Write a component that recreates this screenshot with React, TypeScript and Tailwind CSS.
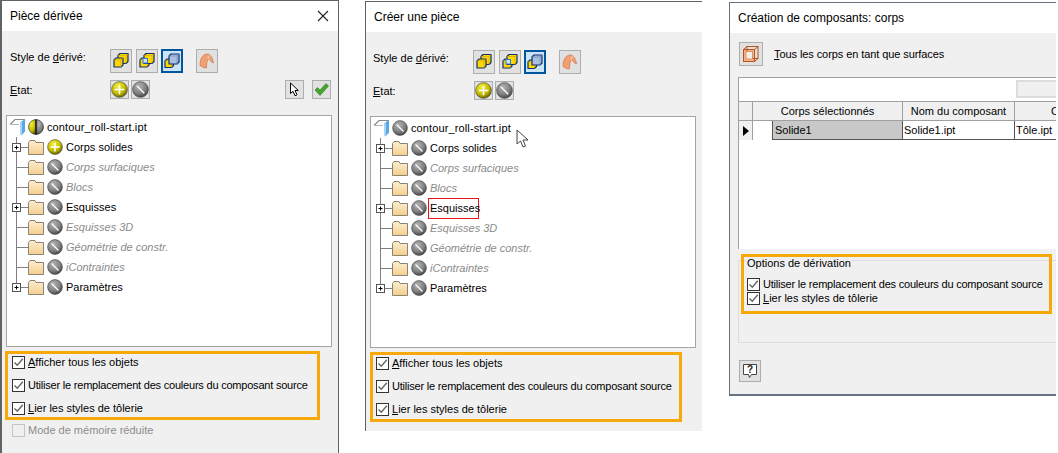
import { useId } from 'react'
import type { ReactNode } from 'react'

function Ball({ kind, size = 16 }: { kind: 'plus' | 'none' | 'half'; size?: number }) {
  const id = useId()
  return (
    <svg width={size} height={size} viewBox="0 0 16 16" className="shrink-0">
      <defs>
        <radialGradient id={id + 'y'} cx="40%" cy="30%" r="75%">
          <stop offset="0" stopColor="#f4f03a" />
          <stop offset="0.6" stopColor="#c4bc00" />
          <stop offset="1" stopColor="#5c5600" />
        </radialGradient>
        <radialGradient id={id + 'g'} cx="40%" cy="30%" r="75%">
          <stop offset="0" stopColor="#b4b4b4" />
          <stop offset="0.6" stopColor="#808080" />
          <stop offset="1" stopColor="#404040" />
        </radialGradient>
      </defs>
      {kind === 'half' ? (
        <>
          <path d="M8 .5a7.5 7.5 0 0 0 0 15z" fill={`url(#${id}y)`} stroke="#333" strokeWidth=".6" />
          <path d="M8 .5a7.5 7.5 0 0 1 0 15z" fill={`url(#${id}g)`} stroke="#333" strokeWidth=".6" />
          <path d="M8 .5v15" stroke="#111" strokeWidth="1.2" />
        </>
      ) : (
        <circle cx="8" cy="8" r="7.4" fill={`url(#${id}${kind === 'plus' ? 'y' : 'g'})`} stroke="#444" strokeWidth=".6" />
      )}
      {kind === 'plus' && <path d="M8 3.5v9M3.5 8h9" stroke="#fff" strokeWidth="1.5" />}
      {kind === 'none' && <path d="M4.5 4.5l7 7" stroke="#fff" strokeWidth="1.2" />}
    </svg>
  )
}

function Folder() {
  const id = useId()
  return (
    <svg width="16" height="16" viewBox="0 0 16 16" className="shrink-0">
      <defs>
        <linearGradient id={id} x1="0" y1="0" x2="0" y2="1">
          <stop offset="0" stopColor="#fdeed2" />
          <stop offset="1" stopColor="#f3cf8f" />
        </linearGradient>
      </defs>
      <path d="M.5 3.5L2 1.5h5l1 2h7.5v12H.5z" fill={`url(#${id})`} stroke="#8d8371" strokeWidth="1" />
    </svg>
  )
}

function PartIcon() {
  return (
    <svg width="17" height="18" viewBox="0 0 17 18" className="shrink-0">
      <path d="M1 6.5L6 1.5h10" fill="none" stroke="#8a8a8a" strokeWidth="1.2" />
      <path d="M1 6.5h9" stroke="#b5b5b5" strokeWidth="1" />
      <path d="M11 4.5L16 1v12.500l-3.500 4L11 15z" fill="#5aa9e6" />
      <path d="M11 4.500l2-.5v12l-1 1.500-1-2z" fill="#a8d4f5" />
    </svg>
  )
}

function Gutter({ plus, last }: { plus?: boolean; last?: boolean }) {
  return (
    <svg width="21" height="20" viewBox="0 0 21 20" className="shrink-0">
      <path d={last ? 'M9.500 0v10M9.500 10.500H21' : 'M9.500 0v20M9.500 10.500H21'} stroke="#7f7f7f" strokeWidth="1" />
      {plus && (
        <>
          <rect x="5.500" y="6.500" width="8" height="8" fill="#fff" stroke="#555" />
          <path d="M7.500 10.500h4M9.500 8.500v4" stroke="#000" strokeWidth="1" />
        </>
      )}
    </svg>
  )
}

function TreeRow({ label, ball, plus, last, dim, mark }: { label: string; ball: 'plus' | 'none'; plus?: boolean; last?: boolean; dim?: boolean; mark?: boolean }) {
  return (
    <div className="flex items-center h-5">
      <Gutter plus={plus} last={last} />
      <Folder />
      <span className="ml-[3px]"><Ball kind={ball} /></span>
      {mark ? (
        <span className="ml-[1px] pl-[1px] w-[51px] h-[21px] leading-[19px] border border-[#e8141c] text-black">{label}</span>
      ) : (
        <span className={dim ? 'ml-[3px] italic text-[#8b8b8b]' : 'ml-[3px] text-black'}>{label}</span>
      )}
    </div>
  )
}

function Tree({ root, firstBall, mark }: { root: 'half' | 'none'; firstBall: 'plus' | 'none'; mark?: boolean }) {
  return (
    <div className="h-[232px] bg-white border border-[#a5a5a5] pt-[1px]">
      <div className="flex items-center h-5 pl-[2px]">
        <PartIcon />
        <span className="ml-[2px]"><Ball kind={root} /></span>
        <span className="ml-[3px] text-black tracking-[0.12px]">contour_roll-start.ipt</span>
      </div>
      <TreeRow label="Corps solides" ball={firstBall} plus />
      <TreeRow label="Corps surfaciques" ball="none" dim />
      <TreeRow label="Blocs" ball="none" dim />
      <TreeRow label="Esquisses" ball="none" plus mark={mark} />
      <TreeRow label="Esquisses 3D" ball="none" dim />
      <TreeRow label="Géométrie de constr." ball="none" dim />
      <TreeRow label="iContraintes" ball="none" dim />
      <TreeRow label="Paramètres" ball="none" plus last />
    </div>
  )
}

function Check({ children, off }: { children: ReactNode; off?: boolean }) {
  return (
    <div className={off ? 'flex items-center text-[#8c8c8c]' : 'flex items-center text-black'}>
      <span className={off ? 'w-[13px] h-[13px] bg-[#f0f0f0] border border-[#c4c4c4] shrink-0' : 'w-[13px] h-[13px] bg-white border border-[#333] shrink-0 flex items-center justify-center'}>
        {!off && (
          <svg width="11" height="11" viewBox="0 0 11 11">
            <path d="M1.500 5.500l2.800 2.800L9.800 1.800" fill="none" stroke="#666" strokeWidth="1.400" />
          </svg>
        )}
      </span>
      <span className="ml-[3px] whitespace-nowrap">{children}</span>
    </div>
  )
}

function Tool({ children, active, w = 'w-[22px]', h = 'h-[24px]' }: { children: ReactNode; active?: boolean; w?: string; h?: string }) {
  return (
    <div className={`${w} ${h} flex items-center justify-center shrink-0 ${active ? 'bg-[#cce4f7] border-2 border-[#00569c]' : 'bg-[#e1e1e1] border border-[#adadad]'}`}>
      {children}
    </div>
  )
}

// bloc vu en perspective: une seule silhouette, arêtes intérieures à peine marquées
function Cube({ x, y, s, fill, edge }: { x: number; y: number; s: number; fill: string; edge: string }) {
  const d = 2
  return (
    <g>
      <path
        d={`M${x} ${y}l${d} ${-d}h${s}v${s}l${-d} ${d}h${-s}z`}
        fill={fill}
        stroke="#0f2f70"
        strokeWidth="1.200"
        strokeLinejoin="round"
      />
      <path d={`M${x} ${y}h${s}v${s}M${x + s} ${y}l${d} ${-d}`} fill="none" stroke={edge} strokeWidth=".7" />
    </g>
  )
}

function StyleIcon({ kind }: { kind: 1 | 2 | 3 }) {
  return (
    <svg width="16" height="16" viewBox="0 0 16 16">
      {kind === 1 && (
        <>
          <Cube x={5} y={2.500} s={8} fill="#ffd800" edge="#d9a800" />
          <Cube x={1} y={7} s={7} fill="#ffd800" edge="#d9a800" />
        </>
      )}
      {kind === 2 && (
        <>
          <Cube x={1} y={7} s={7} fill="#ffd800" edge="#d9a800" />
          <Cube x={5} y={2.500} s={8} fill="#ffd800" edge="#d9a800" />
          <rect x="4" y="5.500" width="4.500" height="4.500" fill="#cfe4fa" stroke="#2d7bd0" strokeWidth="1" />
        </>
      )}
      {kind === 3 && (
        <>
          <Cube x={1} y={8} s={6.500} fill="#ffd800" edge="#d9a800" />
          <Cube x={5} y={3} s={8} fill="#a9c0e0" edge="#6f8db8" />
        </>
      )}
    </svg>
  )
}

function SurfaceIcon() {
  return (
    <svg width="16" height="16" viewBox="0 0 16 16">
      <path d="M1 12.500C1 6.500 3 1.500 8 1c3-.2 5.500 3 6.500 9L12 8.500C11 7 10 6 9 6c-1 2-1.500 5-1.500 9C5 15 3 14 1 12.500z" fill="#f2a073" stroke="#c9764a" strokeWidth=".7" />
      <path d="M9 6c0-1.500.5-3 2-3.500" fill="none" stroke="#fbd8c2" strokeWidth="1" />
    </svg>
  )
}

function StylesBar() {
  return (
    <div className="flex items-center h-6">
      <span className="w-[100px] text-black -mt-[8px]">Style de <u>d</u>érivé:</span>
      <Tool><StyleIcon kind={1} /></Tool>
      <span className="w-1" />
      <Tool><StyleIcon kind={2} /></Tool>
      <span className="w-[3px]" />
      <Tool active><StyleIcon kind={3} /></Tool>
      <span className="w-[13px]" />
      <Tool><SurfaceIcon /></Tool>
    </div>
  )
}

function StateBalls() {
  return (
    <>
      <Tool w="w-[19px]" h="h-[19px]"><Ball kind="plus" size={17} /></Tool>
      <span className="w-[2px]" />
      <Tool w="w-[19px]" h="h-[19px]"><Ball kind="none" size={17} /></Tool>
    </>
  )
}

function Highlight({ children }: { children: ReactNode }) {
  return <div className="border-[3px] border-[#f7a90a] flex flex-col">{children}</div>
}

function OptionRows() {
  return (
    <div className="-mt-[2px] flex flex-col gap-[3px]">
      <div className="h-5 flex items-center"><Check><u>A</u>fficher tous les objets</Check></div>
      <div className="h-5 flex items-center"><Check><span className="tracking-[-0.21px]">Utiliser le remplacement des couleurs du composant source</span></Check></div>
      <div className="h-5 flex items-center"><Check><u>L</u>ier les styles de tôlerie</Check></div>
    </div>
  )
}

const cellHead = 'h-full flex items-center justify-center border-r border-[#a0a0a0] shrink-0'

export default function App() {
  return (
    <div className="w-[1058px] h-[453px] bg-white overflow-hidden flex items-start text-[11px] leading-none font-['Liberation_Sans',sans-serif]">
      {/* Pièce dérivée */}
      <div className="w-[339px] h-[453px] shrink-0 border-l-2 border-r border-t border-[#5f6368] bg-[#f0f0f0] flex flex-col">
        <div className="h-[30px] bg-white flex items-center justify-between pl-[8px] pr-[9px] shrink-0">
          <span className="text-[12px] text-black">Pièce dérivée</span>
          <svg width="12" height="12" viewBox="0 0 12 12">
            <path d="M1 1l10 10M11 1L1 11" stroke="#222" strokeWidth="1.100" />
          </svg>
        </div>
        <div className="pl-[8px] pt-[18px]">
          <StylesBar />
        </div>
        <div className="flex items-center h-[19px] mt-[7px] pl-[8px] pr-[7px]">
          <span className="w-[100px] pt-[2px] text-black"><u>E</u>tat:</span>
          <StateBalls />
          <span className="flex-1" />
          <Tool w="w-[19px]" h="h-[19px]">
            <svg width="11" height="15" viewBox="0 0 11 15">
              <path d="M1.500 1v10.500L4 9.300l2 4.400 2-.9-2-4.300h3.300z" fill="#fff" stroke="#000" strokeWidth="1" />
            </svg>
          </Tool>
          <span className="w-2" />
          <Tool w="w-[19px]" h="h-[19px]">
            <svg width="15" height="13" viewBox="0 0 15 13">
              <path d="M1 7l2.500-2.500L6 7l6-6.500L14.500 3 6 12.500z" fill="#45a52a" stroke="#2f7d1b" strokeWidth=".6" />
            </svg>
          </Tool>
        </div>
        <div className="ml-[4px] mr-[6px] mt-[16px]">
          <Tree root="half" firstBall="plus" />
        </div>
        <div className="ml-[3px] w-[315px] mt-[4px]">
          <Highlight>
            <div className="h-[63px] pl-[4px]">
              <OptionRows />
            </div>
          </Highlight>
        </div>
        <div className="ml-[10px] h-5 flex items-center">
          <Check off>Mode de mémoire réduite</Check>
        </div>
      </div>

      {/* Créer une pièce */}
      <div className="w-[337px] h-[430px] ml-[26px] mt-[1px] shrink-0 border-l border-t border-[#5f6368] bg-[#f0f0f0] flex flex-col">
        <div className="h-[30px] bg-white flex items-center pl-[8px] shrink-0">
          <span className="text-[12px] text-black">Créer une pièce</span>
        </div>
        <div className="pl-[7px] pt-[18px]">
          <StylesBar />
        </div>
        <div className="flex items-center h-[19px] mt-[7px] pl-[7px]">
          <span className="w-[101px] pt-[1px] text-black"><u>E</u>tat:</span>
          <StateBalls />
        </div>
        <div className="relative ml-[4px] w-[326px] mt-[16px]">
          <Tree root="none" firstBall="none" mark />
          <svg width="14" height="20" viewBox="0 0 14 20" className="absolute left-[146px] top-[13px]">
            <path d="M1 1v14l3.500-3 2.500 6 2.500-1-2.500-6h5z" fill="#fff" stroke="#444" strokeWidth="1" />
          </svg>
        </div>
        <div className="ml-[4px] w-[312px] mt-[4px]">
          <Highlight>
            <div className="h-[64px] pl-[3px]">
              <OptionRows />
            </div>
          </Highlight>
        </div>
      </div>

      {/* Création de composants: corps */}
      <div className="w-[327px] h-[394px] ml-[27px] mt-[2px] shrink-0 border-l border-t border-b-2 border-[#66727f] bg-[#f0f0f0] flex flex-col">
        <div className="h-[30px] bg-white flex items-center pl-[8px] shrink-0">
          <span className="text-[12px] text-black">Création de composants: corps</span>
        </div>
        <div className="flex items-center h-6 pl-[9px] mt-[9px] shrink-0">
          <Tool w="w-6">
            <svg width="18" height="18" viewBox="0 0 18 18">
              <rect x="1.500" y="4.500" width="11" height="12" fill="#f6b38c" stroke="#b9521f" strokeWidth="1" />
              <rect x="5" y="1.500" width="11" height="12" fill="none" stroke="#b9521f" strokeWidth="1" />
              <rect x="4" y="6.500" width="6.500" height="7.500" fill="#f3efe9" stroke="#d98452" strokeWidth=".8" />
              <path d="M1.500 4.500L5 1.500M12.500 4.500L16 1.500M12.500 16.500L16 13.500" stroke="#b9521f" strokeWidth="1" />
            </svg>
          </Tool>
          <span className="ml-[11px] text-black tracking-[-0.08px]"><u>T</u>ous les corps en tant que surfaces</span>
        </div>
        {/* tableau */}
        <div className="ml-[8px] mt-[11px] h-[172px] bg-white border-t border-l border-[#a0a0a0] flex flex-col shrink-0">
          <div className="h-[23px] flex justify-end items-start pt-[2px] shrink-0">
            <div className="w-10 h-[18px] bg-[#f0f0f0] border-2 border-r-0 border-[#dcdcdc]" />
          </div>
          <div className="h-[20px] bg-[#f0f0f0] border-t border-b border-[#a0a0a0] flex text-black shrink-0 overflow-hidden">
            <div className={`${cellHead} w-[14px]`} />
            <div className={`${cellHead} w-[150px]`}>Corps sélectionnés</div>
            <div className={`${cellHead} w-[112px]`}>Nom du composant</div>
            <div className="flex-1 h-full flex items-center pl-[36px]">C</div>
          </div>
          <div className="h-[19px] flex text-black shrink-0">
            <div className="w-[14px] bg-[#f0f0f0] border-r border-[#a0a0a0] flex items-center justify-center shrink-0">
              <svg width="6" height="10" viewBox="0 0 6 10"><path d="M0 0l6 5-6 5z" fill="#000" /></svg>
            </div>
            <div className="w-[19px] shrink-0" />
            <div className="w-[131px] bg-[#c8c8c8] border-l border-b border-r border-[#555] flex items-center pl-[2px] shrink-0">Solide1</div>
            <div className="w-[112px] border-b border-r border-[#555] flex items-center pl-[1px] shrink-0">Solide1.ipt</div>
            <div className="flex-1 border-b border-[#555] flex items-center pl-[1px]">Tôle.ipt</div>
          </div>
        </div>
        {/* options */}
        <div className="relative ml-[8px] mt-[11px] h-[83px] border border-r-0 border-[#dcdcdc] shrink-0">
          <span className="absolute left-[7px] -top-[3px] bg-[#f0f0f0] px-[1px] text-black">Options de dérivation</span>
          <div className="pl-[8px] pt-[16px]">
            <div className="h-[14px] flex items-center"><Check><span className="tracking-[-0.21px]">Utiliser le remplacement des couleurs du composant source</span></Check></div>
            <div className="h-[14px] flex items-center"><Check><u>L</u>ier les styles de tôlerie</Check></div>
          </div>
          <div className="absolute left-[2px] -top-[7px] w-[311px] h-[60px] border-[3px] border-[#f7a90a]" />
        </div>
        <div className="ml-[9px] mt-[17px] shrink-0">
          <Tool h="h-[22px]">
            <div className="relative">
              <svg width="16" height="16" viewBox="0 0 16 16">
                <path d="M1.500 1.500h13v10H9.500L7.500 14.500 6.500 11.500h-5z" fill="#fff" stroke="#444" strokeWidth="1" />
              </svg>
              <span className="absolute left-[5px] top-[2px] text-[10px] font-bold text-[#222]">?</span>
            </div>
          </Tool>
        </div>
      </div>
    </div>
  )
}
